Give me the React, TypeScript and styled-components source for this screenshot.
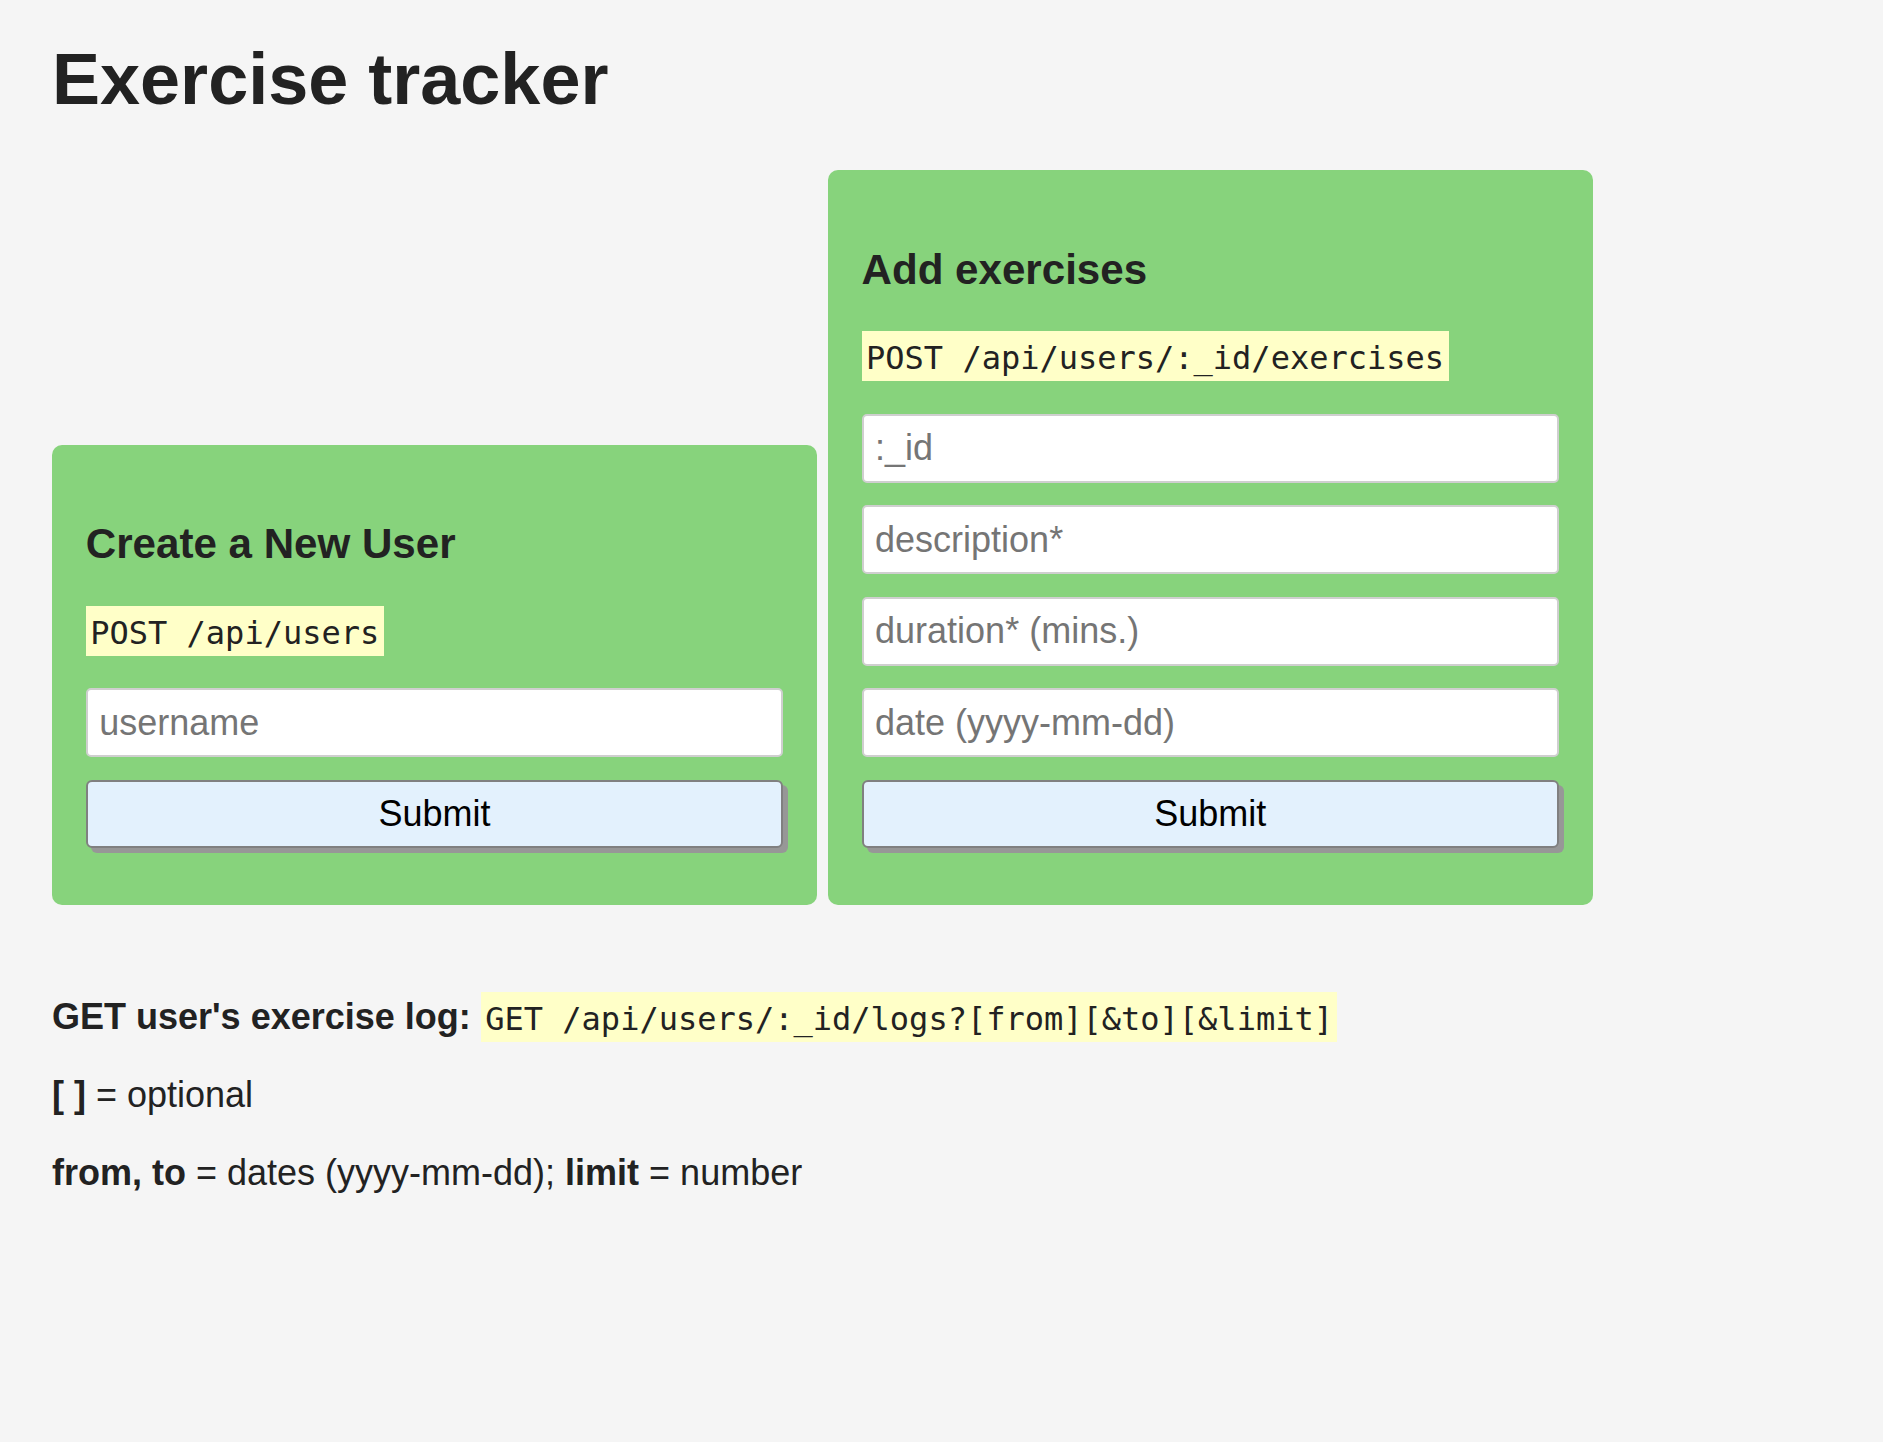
import React from "react";
import styled, { createGlobalStyle } from "styled-components";

const GlobalStyle = createGlobalStyle`
  *, *::before, *::after { box-sizing: border-box; }
  html, body {
    margin: 0;
    padding: 0;
    background: #f5f5f5;
  }
  body {
    font-family: "Liberation Sans", Arial, Helvetica, sans-serif;
    font-size: 36px;
    color: #222;
    min-height: 1442px;
  }
`;

const Page = styled.div`
  padding: 38px 52px 60px 52px;
`;

const Title = styled.h1`
  margin: 0 0 50px 0;
  font-size: 72px;
  font-weight: bold;
  line-height: normal;
  color: #222;
`;

const FormRow = styled.div`
  display: flex;
  align-items: flex-end;
  gap: 10.8px;
  margin-bottom: 91px;
`;

const Card = styled.form`
  width: 765px;
  padding: 33.75px 33.75px 35px 33.75px;
  background: #87d37c;
  border-radius: 10px;
`;

const CardTitle = styled.h3`
  margin: 42px 0;
  font-size: 42.12px;
  font-weight: bold;
  line-height: normal;
  color: #222;
`;

const Para = styled.p`
  margin: 0 0 36px 0;
  font-size: 36px;
  line-height: normal;
`;

const Code = styled.code`
  font-family: "DejaVu Sans Mono", monospace;
  font-size: 32px;
  background: #ffffc8;
  padding: 7.5px 4.5px 4.5px 4.5px;
  color: #222;
`;

const TextInput = styled.input`
  display: block;
  width: 100%;
  height: 69px;
  margin: 0 0 22.5px 0;
  padding: 0 11.5px;
  border: 2px solid #cfcfcf;
  border-radius: 5px;
  background: #fff;
  font-family: "Liberation Sans", Arial, sans-serif;
  font-size: 36px;
  color: #222;
  outline: none;
  &::placeholder {
    color: #757575;
  }
`;

const SubmitButton = styled.button`
  display: block;
  width: 100%;
  height: 68px;
  margin: 0 0 22.5px 0;
  padding: 0;
  border: 2px solid #808080;
  border-radius: 6px;
  background: #e3f1fd;
  box-shadow: 5px 5px 0 #979797;
  font-family: "Liberation Sans", Arial, sans-serif;
  font-size: 36px;
  color: #000;
  cursor: pointer;
`;

const Bold = styled.strong`
  font-weight: bold;
`;

export default function App() {
  return (
    <>
      <GlobalStyle />
      <Page>
        <Title>Exercise tracker</Title>
        <FormRow>
          <Card onSubmit={(e) => e.preventDefault()}>
            <CardTitle>Create a New User</CardTitle>
            <Para>
              <Code>POST /api/users</Code>
            </Para>
            <TextInput type="text" name="username" placeholder="username" />
            <SubmitButton type="submit">Submit</SubmitButton>
          </Card>
          <Card onSubmit={(e) => e.preventDefault()}>
            <CardTitle>Add exercises</CardTitle>
            <Para>
              <Code>POST /api/users/:_id/exercises</Code>
            </Para>
            <TextInput type="text" name=":_id" placeholder=":_id" />
            <TextInput type="text" name="description" placeholder="description*" />
            <TextInput type="text" name="duration" placeholder="duration* (mins.)" />
            <TextInput type="text" name="date" placeholder="date (yyyy-mm-dd)" />
            <SubmitButton type="submit">Submit</SubmitButton>
          </Card>
        </FormRow>
        <Para>
          <Bold>GET user's exercise log:</Bold>{" "}
          <Code>GET /api/users/:_id/logs?[from][&amp;to][&amp;limit]</Code>
        </Para>
        <Para>
          <Bold>[ ]</Bold> = optional
        </Para>
        <Para>
          <Bold>from, to</Bold> = dates (yyyy-mm-dd); <Bold>limit</Bold> = number
        </Para>
      </Page>
    </>
  );
}
